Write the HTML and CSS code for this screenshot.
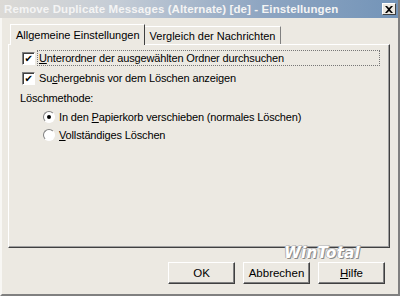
FILE: index.html
```html
<!DOCTYPE html>
<html>
<head>
<meta charset="utf-8">
<link rel="stylesheet" href="styles.css">
</head>
<body>
<div class="window">
  <div class="titlebar">
    <span class="title">Remove Duplicate Messages (Alternate) [de] - Einstellungen</span>
    <span class="close"><svg width="8" height="7" viewBox="0 0 8 7"><path d="M0 0h2l2 2 2-2h2L5 3.5 8 7H6L4 5 2 7H0l3-3.5z" fill="#000"/></svg></span>
  </div>
  <div class="body">
    <div class="tabs">
      <div class="tab active">Allgemeine Einstellungen</div>
      <div class="tab">Vergleich der Nachrichten</div>
    </div>
    <div class="panel">
      <label class="row focus"><span class="check">✔</span><span><u>U</u>nterordner der ausgewählten Ordner durchsuchen</span></label>
      <label class="row"><span class="check">✔</span><span>Su<u>c</u>hergebnis vor dem Löschen anzeigen</span></label>
      <div class="group">Löschmethode:</div>
      <label class="row radio-row"><span class="radio on"></span><span>In den <u>P</u>apierkorb verschieben (normales Löschen)</span></label>
      <label class="row radio-row"><span class="radio"></span><span><u>V</u>ollständiges Löschen</span></label>
    </div>
    <div class="buttons">
      <div class="btn">OK</div>
      <div class="btn">Abbrechen</div>
      <div class="btn"><u>H</u>ilfe</div>
      <div class="watermark">WinTotal</div>
    </div>
  </div>
</div>
</body>
</html>
```
FILE: styles.css
```css
html, body { margin: 0; padding: 0; }
body {
  width: 400px; height: 296px; overflow: hidden;
  background: #ece9e2;
  font-family: "Liberation Sans", Arial, sans-serif;
  font-size: 11px; color: #000;
}
.window {
  width: 400px; height: 296px; box-sizing: border-box;
  border-left: 2px solid #f8f7f4;
  border-bottom: 2px solid #808080;
  border-right: 2px solid #808080;
  display: flex; flex-direction: column;
}
.titlebar {
  height: 18px; display: flex; align-items: center; justify-content: space-between;
  background: linear-gradient(to right, #dcdad6 0%, #c4ccd6 30%, #8fa6c2 65%, #7394b8 100%);
  padding: 0 2px 0 4px; margin-left: -2px;
}
.title { color: #f4f4f4; font-weight: bold; font-size: 11.5px; letter-spacing: 0.1px; }
.close {
  width: 14px; height: 12px; background: #ece9e2; box-sizing: border-box;
  border: 1px solid; border-color: #fff #404040 #404040 #fff;
  display: flex; align-items: center; justify-content: center;
}
.body { flex: 1; display: flex; flex-direction: column; padding: 5px 8px 0 6px; position: relative; }
.tabs { display: flex; height: 21px; align-items: flex-end; padding-left: 2px; }
.tab {
  height: 18px; box-sizing: border-box; padding: 2px 4px 0 5px;
  border-top: 1px solid #fff; border-right: 1px solid #808080;
  line-height: 15px; font-size: 11px;
}
.tab.active {
  height: 21px; border-left: 1px solid #fff; border-right: 1px solid #404040;
  padding: 3px 4px 0 5px; margin-bottom: -1px; position: relative; z-index: 1;
  background: #ece9e2;
}
.panel {
  height: 204px; box-sizing: border-box;
  border: 1px solid; border-color: #fff #404040 #404040 #fff;
  box-shadow: inset -1px -1px 0 #a0a0a0;
  padding: 3px 10px 0 13px; display: flex; flex-direction: column;
  font-size: 11px; letter-spacing: -0.15px;
}
.row { display: flex; align-items: center; height: 20px; gap: 4px; }
.row.focus span:last-child { outline: 1px dotted #777; outline-offset: 0; flex: 1; padding: 1px 1px; margin-left: -1px; }
.check {
  width: 13px; height: 13px; box-sizing: border-box; flex: none;
  border: 1px solid; border-color: #808080 #fff #fff #808080;
  box-shadow: inset 1px 1px 0 #404040; background: #fff;
  font-size: 10px; line-height: 11px; text-align: center; font-family: "DejaVu Sans", sans-serif;
}
.group { height: 20px; line-height: 20px; margin-left: -2px; }
.radio-row { margin-left: 21px; height: 18px; }
.radio {
  width: 12px; height: 12px; border-radius: 50%; box-sizing: border-box; flex: none;
  border: 1px solid; border-color: #808080 #fff #fff #808080; background: #fff;
  position: relative;
}
.radio.on::after {
  content: ""; position: absolute; left: 3px; top: 3px; width: 4px; height: 4px; border-radius: 50%; background: #000;
}
.buttons { display: flex; justify-content: flex-end; gap: 8px; padding: 14px 5px 0 0; position: relative; }
.btn {
  width: 67px; height: 22px; box-sizing: border-box; display: flex; align-items: center; justify-content: center;
  border: 1px solid; border-color: #fff #404040 #404040 #fff;
  box-shadow: inset -1px -1px 0 #808080; font-size: 11.5px;
}
.watermark {
  position: absolute; right: 30px; top: -4px;
  font-family: "DejaVu Sans", sans-serif; font-weight: bold; font-style: italic; font-size: 15px;
  color: #fff; letter-spacing: 0.3px;
  text-shadow: 1px 1px 0 #8a8a8a, -1px 0 0 #b0b0b0, 0 -1px 0 #c8c8c8, 1px -1px 0 #b8b8b8;
}
```
